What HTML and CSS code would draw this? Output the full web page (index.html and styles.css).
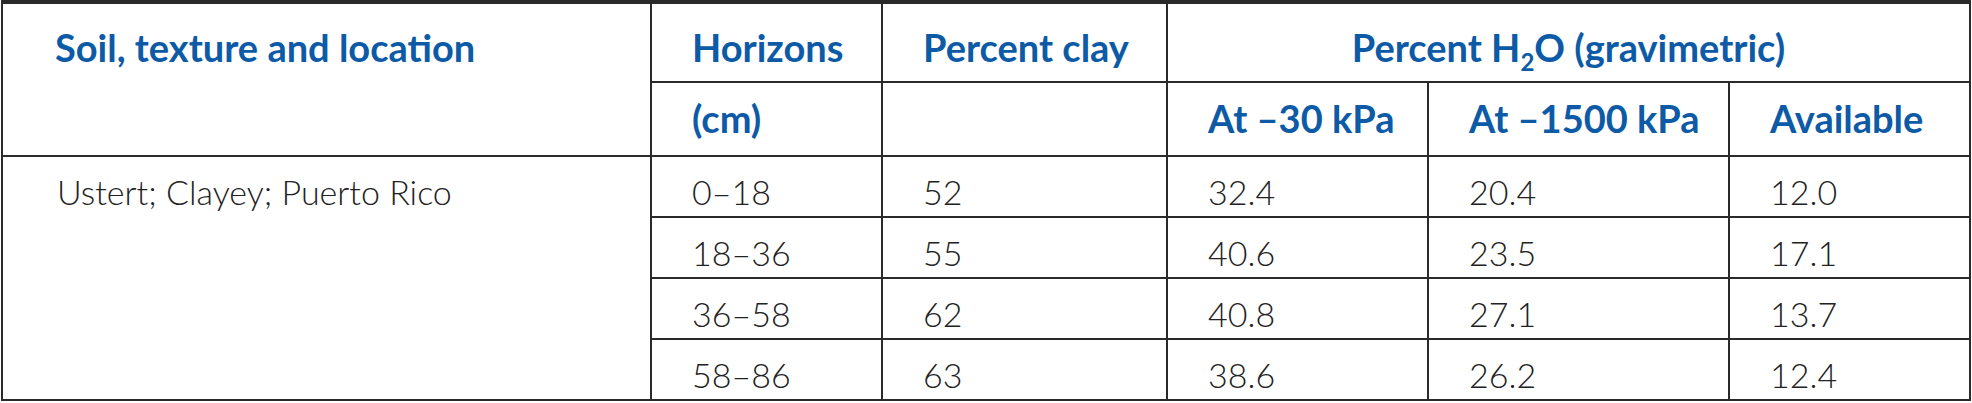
FILE: index.html
```html
<!DOCTYPE html>
<html lang="en">
<head>
  <meta charset="UTF-8" />
  <title>Soil water table</title>
  <link rel="stylesheet" href="styles.css">
</head>
<body>

  <!-- Soil water retention table -->
  <table class="soil-table">
    <colgroup>
      <col class="col-soil">
      <col class="col-horizon">
      <col class="col-clay">
      <col class="col-wet">
      <col class="col-dry">
      <col class="col-avail">
    </colgroup>
    <thead>
      <tr class="head-top">
        <th rowspan="2" class="soil-head">Soil, texture and location</th>
        <th>Horizons</th>
        <th>Percent clay</th>
        <th colspan="3" class="center">Percent H<sub>2</sub>O (gravimetric)</th>
      </tr>
      <tr class="head-sub">
        <th>(cm)</th>
        <th></th>
        <th>At &ndash;30 kPa</th>
        <th>At &ndash;1500 kPa</th>
        <th>Available</th>
      </tr>
    </thead>
    <tbody>
      <tr>
        <td rowspan="4" class="soil-name">Ustert; Clayey; Puerto Rico</td>
        <td>0&ndash;18</td>
        <td>52</td>
        <td>32.4</td>
        <td>20.4</td>
        <td>12.0</td>
      </tr>
      <tr>
        <td>18&ndash;36</td>
        <td>55</td>
        <td>40.6</td>
        <td>23.5</td>
        <td>17.1</td>
      </tr>
      <tr>
        <td>36&ndash;58</td>
        <td>62</td>
        <td>40.8</td>
        <td>27.1</td>
        <td>13.7</td>
      </tr>
      <tr>
        <td>58&ndash;86</td>
        <td>63</td>
        <td>38.6</td>
        <td>26.2</td>
        <td>12.4</td>
      </tr>
    </tbody>
  </table>

</body>
</html>
```

FILE: styles.css
```css
:root {
  --head-blue: #0d5aa6;
  --line: #2a2a2a;
  --text: #222222;
}

body {
  margin: 0;
  padding: 0 0 0 1px;
  background: #ffffff;
  font-family: Lato, 'Open Sans', sans-serif;
}

.soil-table {
  width: 1968px;
  border-collapse: collapse;
  table-layout: fixed;
  border-top: 4px solid var(--line);
}

.col-soil { width: 649px; }
.col-horizon { width: 231px; }
.col-clay { width: 285px; }
.col-wet { width: 261px; }
.col-dry { width: 301px; }
.col-avail { width: 241px; }

th,
td {
  border: 2px solid var(--line);
  padding: 0 0 0 40px;
  text-align: left;
  white-space: nowrap;
  line-height: 1.2;
}

th {
  color: var(--head-blue);
  font-weight: 700;
  font-size: 38px;
}

th.center {
  text-align: center;
  padding-left: 0;
}

th sub {
  font-size: 24px;
  line-height: 0;
}

.head-top {
  height: 80px;
}

.head-top th {
  padding-top: 10px;
}

.head-sub {
  height: 74px;
}

th.soil-head {
  vertical-align: top;
  padding: 21px 0 0 52px;
}

tbody tr {
  height: 61px;
}

td {
  color: var(--text);
  font-weight: 300;
  font-size: 34px;
  padding-top: 12px;
}

td.soil-name {
  vertical-align: top;
  padding: 15px 0 0 54px;
}
```
